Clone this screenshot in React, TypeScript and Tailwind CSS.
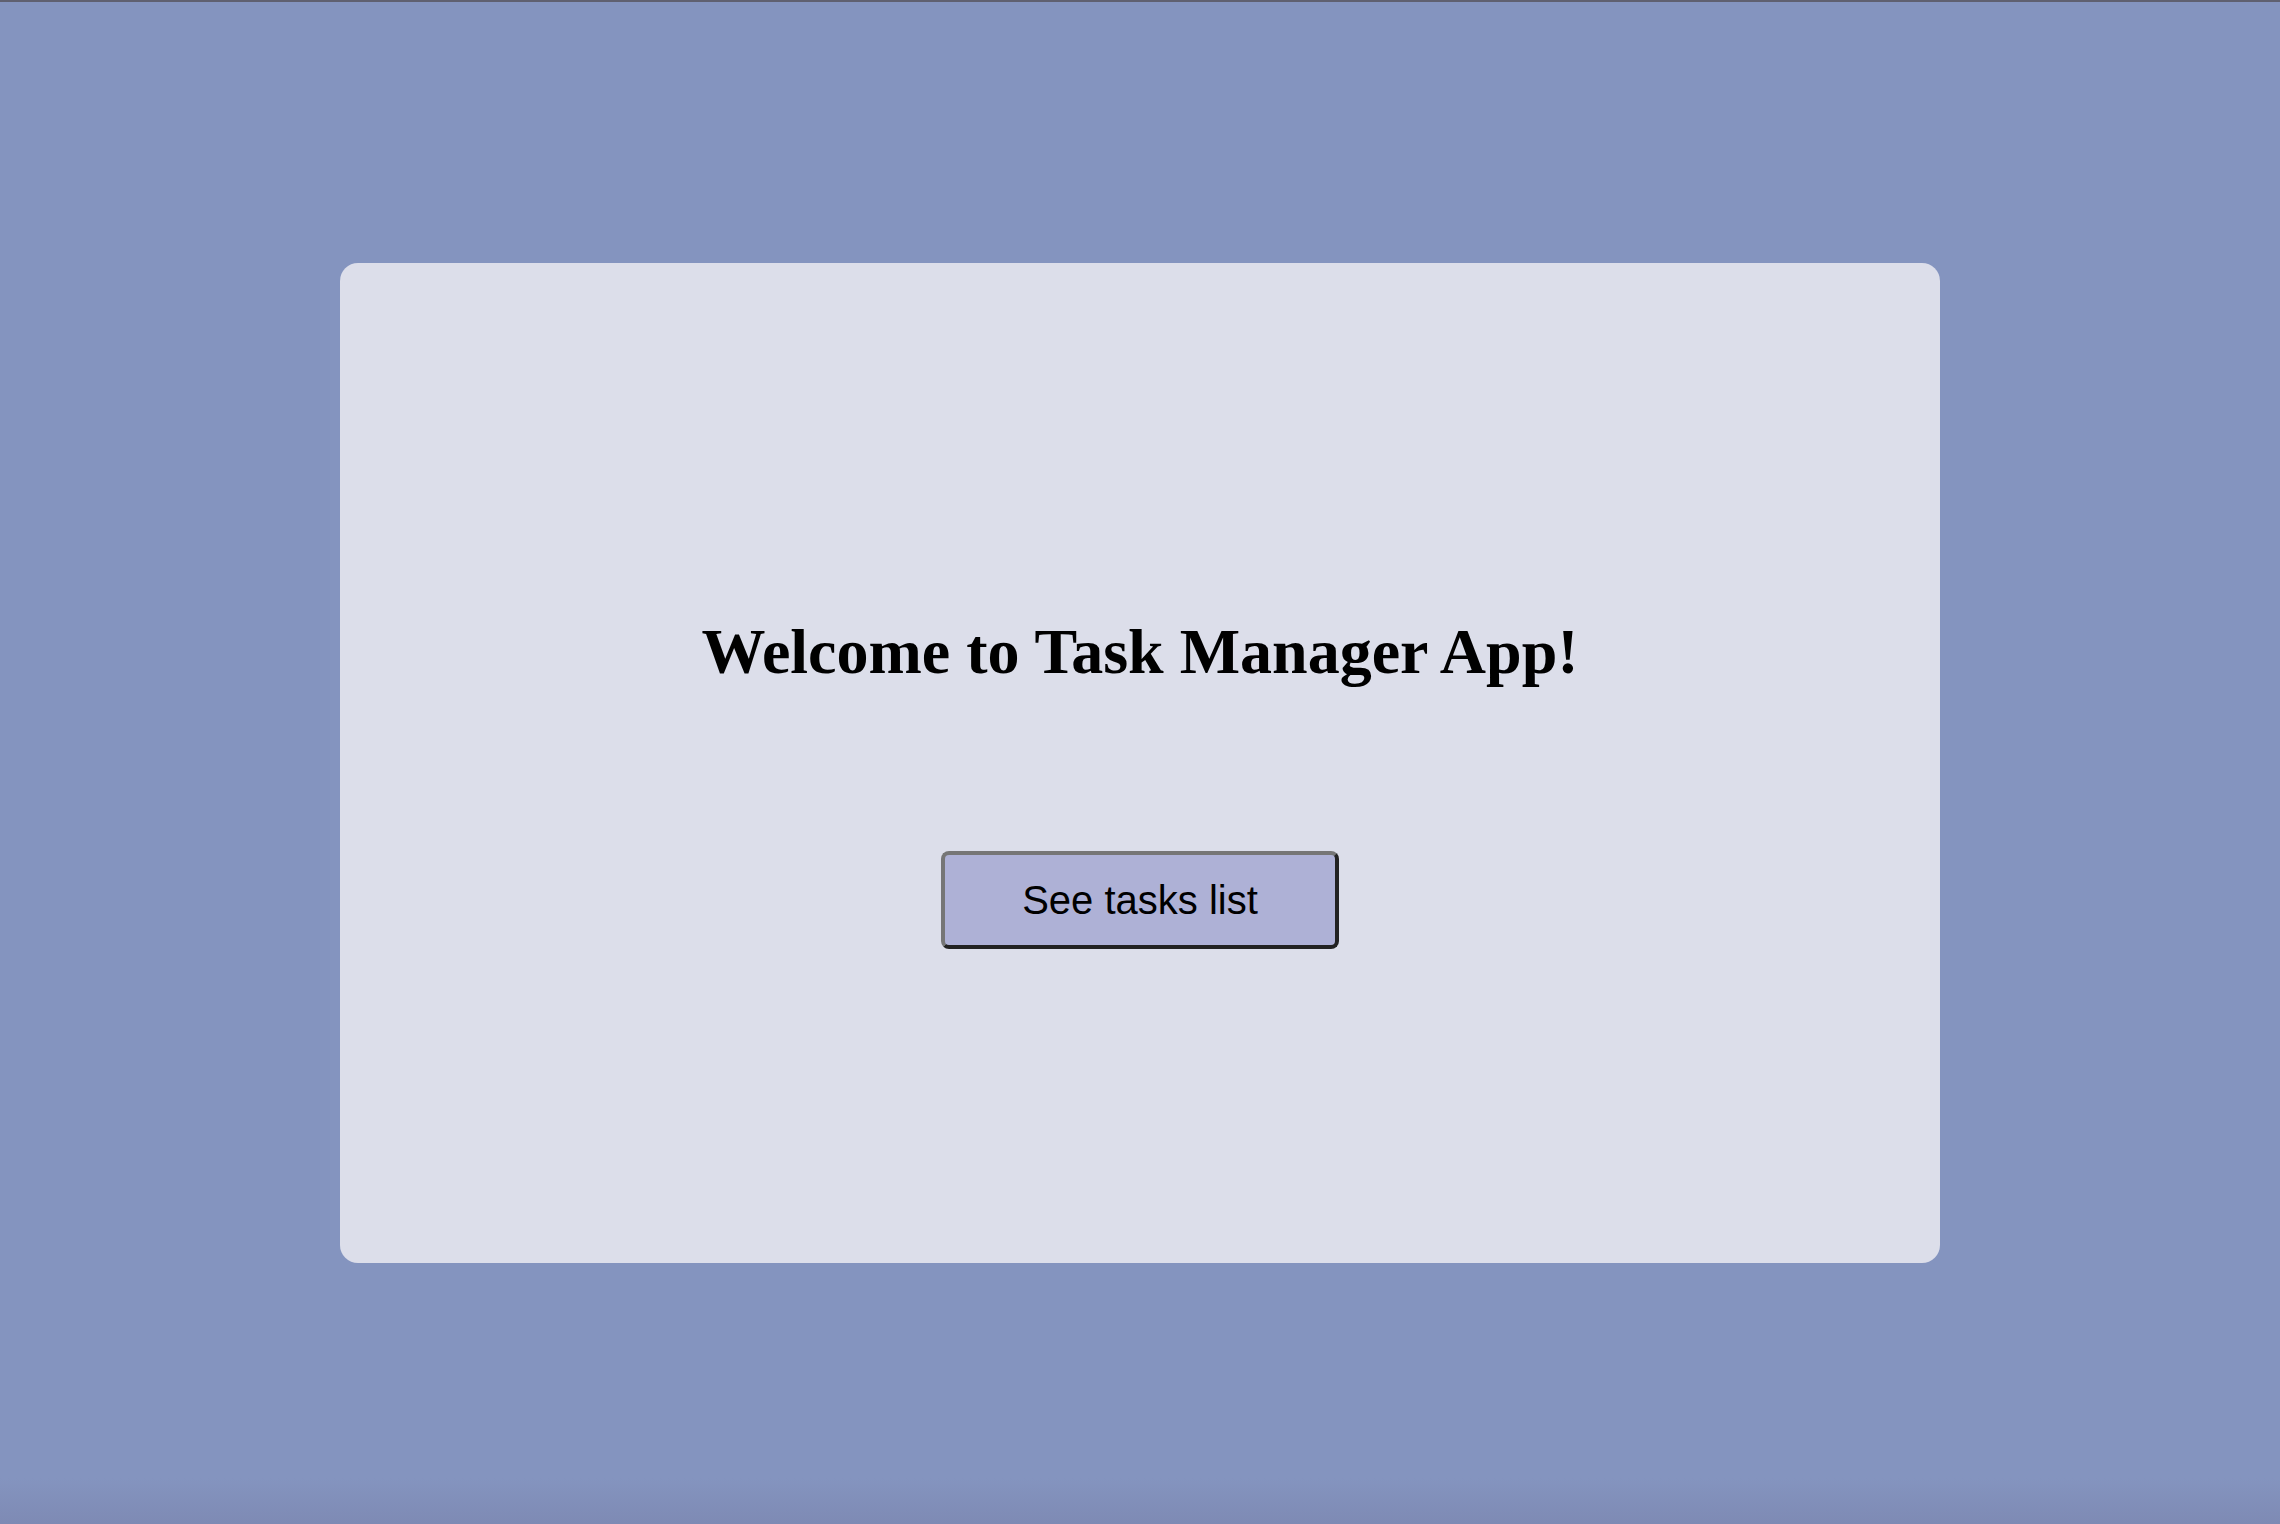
import React from 'react';

export default function App() {
    return (
        <div className="flex flex-col w-full h-[1524px] bg-[linear-gradient(to_bottom,#8494bf_97%,#7e8ab4)]">
            <div className="h-[2px] w-full bg-[#5f6070]" />
            <div className="flex flex-1 items-center justify-center">
                <div className="flex flex-col items-center w-[1600px] h-[1000px] rounded-[18px] bg-[#dcdeea] pt-[352px]">
                    <h1 className="font-['Liberation_Serif',serif] font-bold text-[64px] leading-[74px] text-black">
                        Welcome to Task Manager App!
                    </h1>
                    <button className="mt-[162px] w-[398px] h-[98px] rounded-[8px] border-4 border-t-[#767676] border-l-[#767676] border-b-[#222222] border-r-[#222222] bg-[#aeb1d6] font-['Liberation_Sans',Arial,sans-serif] text-[40px] text-black">
                        See tasks list
                    </button>
                </div>
            </div>
        </div>
    );
}
